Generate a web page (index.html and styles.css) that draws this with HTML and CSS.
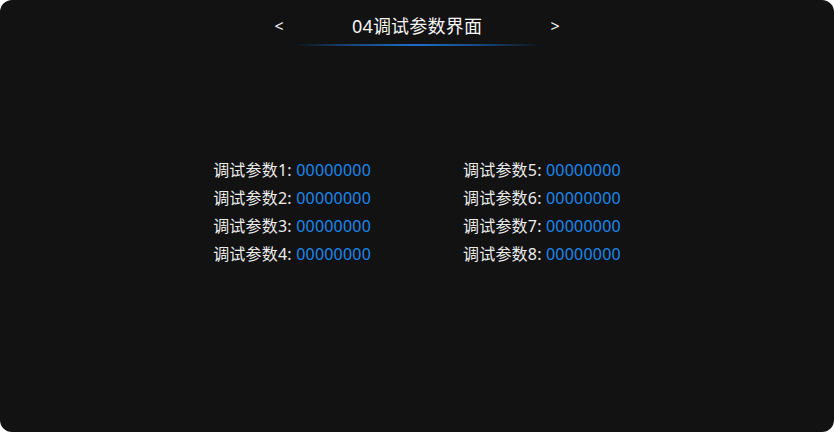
FILE: index.html
```html
<!DOCTYPE html>
<html lang="zh">
<head>
<meta charset="utf-8">
<link rel="stylesheet" href="styles.css">
</head>
<body>
<div class="screen">
  <header class="header">
    <span class="nav">&lt;</span>
    <div class="title-wrap">
      <h1 class="title">04调试参数界面</h1>
      <div class="underline"></div>
    </div>
    <span class="nav">&gt;</span>
  </header>
  <main class="params">
    <div class="col">
      <div class="row"><span class="label">调试参数1:</span> <span class="value">00000000</span></div>
      <div class="row"><span class="label">调试参数2:</span> <span class="value">00000000</span></div>
      <div class="row"><span class="label">调试参数3:</span> <span class="value">00000000</span></div>
      <div class="row"><span class="label">调试参数4:</span> <span class="value">00000000</span></div>
    </div>
    <div class="col">
      <div class="row"><span class="label">调试参数5:</span> <span class="value">00000000</span></div>
      <div class="row"><span class="label">调试参数6:</span> <span class="value">00000000</span></div>
      <div class="row"><span class="label">调试参数7:</span> <span class="value">00000000</span></div>
      <div class="row"><span class="label">调试参数8:</span> <span class="value">00000000</span></div>
    </div>
  </main>
</div>
</body>
</html>
```
FILE: styles.css
```css
* { box-sizing: border-box; }
html, body { margin: 0; padding: 0; background: #ffffff; }
body { font-family: "Noto Sans", "Noto Sans CJK SC", sans-serif; }
.screen {
  width: 834px;
  height: 432px;
  background: #121212;
  border-radius: 12px;
  overflow: hidden;
  color: #f0f0f0;
}
.header {
  display: flex;
  justify-content: center;
  align-items: flex-start;
  padding-top: 13px;
}
.nav {
  font-size: 16px;
  line-height: 26px;
  width: 40px;
  text-align: center;
  color: #f0f0f0;
}
.title-wrap {
  width: 236px;
  display: flex;
  flex-direction: column;
  align-items: center;
}
.title {
  margin: 0;
  font-size: 18px;
  font-weight: 400;
  line-height: 26px;
  color: #f5f5f5;
  letter-spacing: 0.2px;
}
.underline {
  margin-top: 5px;
  width: 248px;
  height: 2px;
  background: linear-gradient(90deg, rgba(26,108,200,0) 0%, rgba(26,108,200,0.6) 25%, #1d6fcc 50%, rgba(26,108,200,0.6) 75%, rgba(26,108,200,0) 100%);
}
.params {
  display: flex;
  justify-content: center;
  gap: 92px;
  margin-top: 110px;
}
.col {
  display: flex;
  flex-direction: column;
}
.row {
  font-size: 16px;
  line-height: 28px;
  white-space: nowrap;
  letter-spacing: 0.2px;
}
.label { color: #ececec; }
.value { color: #1b88ee; }
```
